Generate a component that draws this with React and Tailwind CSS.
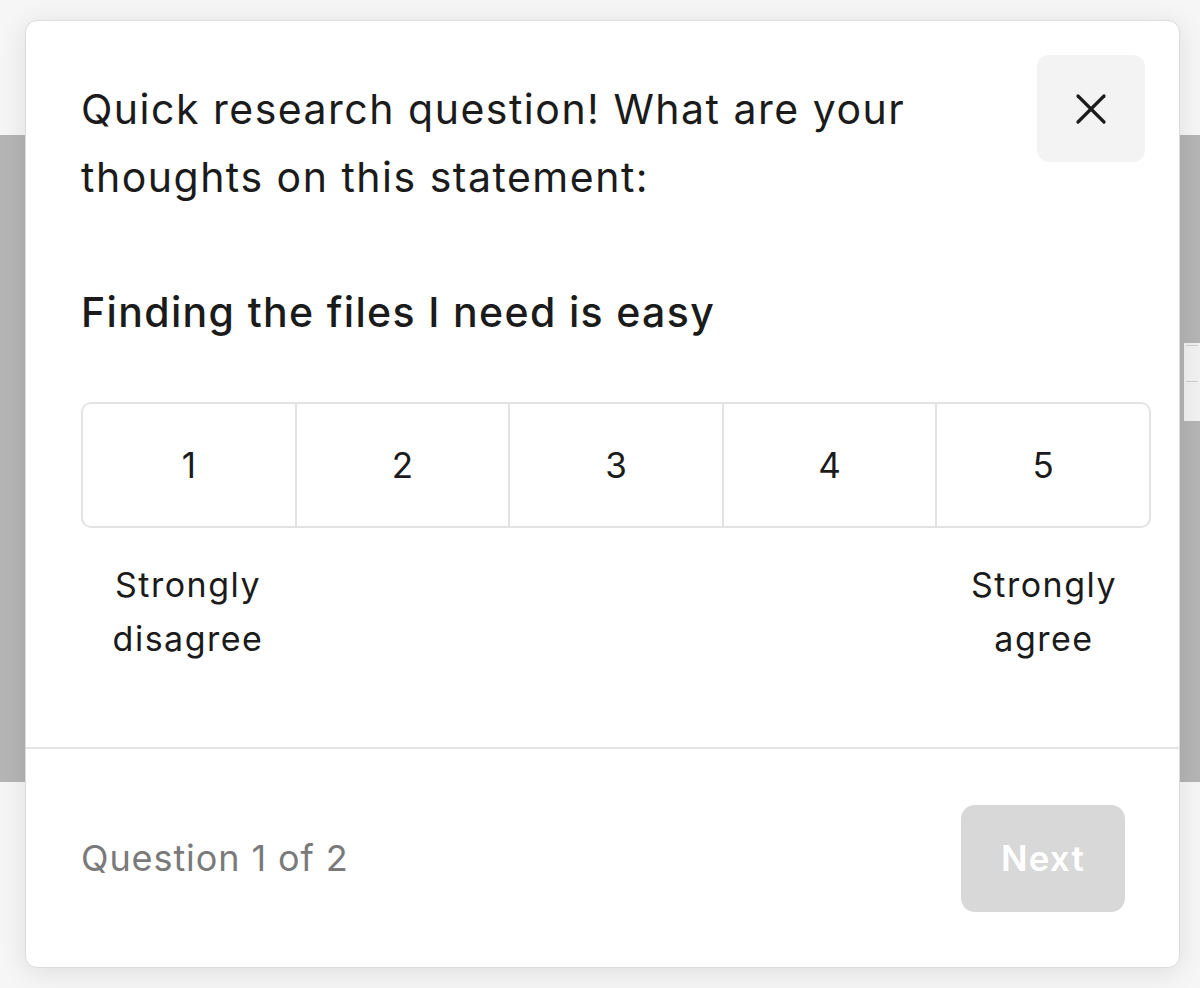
import { X } from "lucide-react";

const options = [1, 2, 3, 4, 5];

const App = () => {
  return (
    <div
      className="relative w-[1200px] h-[988px] overflow-hidden bg-[#f6f6f6]"
      style={{ fontFamily: "Inter, 'Noto Sans', sans-serif" }}
    >
      {/* backdrop page */}
      <div className="flex flex-col h-full">
        <div className="h-[135px] bg-[#f6f6f6]" />
        <div className="h-[647px] bg-[#b5b5b5] flex justify-end">
          <div className="w-[16px] mt-[208px] h-[78px] bg-[#f2f2f2] flex flex-col gap-2 p-[2px]">
            <div className="h-[28px] border-t border-[#cfcfcf]" />
            <div className="h-[28px] border-t border-[#cfcfcf]" />
          </div>
        </div>
        <div className="flex-1 bg-[#f6f6f6]" />
      </div>

      {/* survey card */}
      <div className="absolute left-[25px] top-[20px] w-[1155px] h-[948px] bg-white rounded-[12px] border border-[#dcdcdc] shadow-[0_4px_28px_rgba(0,0,0,0.10)] flex flex-col">
        <button className="absolute top-[34px] right-[34px] w-[108px] h-[107px] rounded-[12px] bg-[#f3f3f3] flex items-center justify-center text-[#1b1b1b]">
          <X className="w-[52px] h-[52px]" strokeWidth={1.5} />
        </button>

        <div className="pl-[55px] pr-[28px] pt-[54px] flex-1">
          <h2 className="max-w-[900px] text-[41px] leading-[68px] text-[#1b1b1b] font-normal tracking-[1.5px]">
            Quick research question! What are your thoughts on this statement:
          </h2>

          <p className="mt-[67px] text-[41px] leading-[68px] text-[#1b1b1b] font-medium tracking-[1.35px]">
            Finding the files I need is easy
          </p>

          <div className="mt-[56px] h-[126px] flex rounded-[10px] border-2 border-[#e3e3e3] overflow-hidden">
            {options.map((n, i) => (
              <button
                key={n}
                className={`flex-1 flex items-center justify-center text-[35px] text-[#1b1b1b] ${
                  i > 0 ? "border-l-2 border-[#e3e3e3]" : ""
                }`}
              >
                {n}
              </button>
            ))}
          </div>

          <div className="mt-[30px] flex justify-between text-[34px] leading-[54px] text-[#1b1b1b] text-center tracking-[1.5px]">
            <div className="w-[214px]">
              Strongly
              <br />
              disagree
            </div>
            <div className="w-[214px]">
              Strongly
              <br />
              agree
            </div>
          </div>
        </div>

        <div className="h-[220px] border-t-2 border-[#e6e6e6] flex items-center justify-between pl-[55px] pr-[54px]">
          <span className="text-[36px] text-[#7a7a7a] tracking-[0.9px]">Question 1 of 2</span>
          <button className="w-[164px] h-[107px] rounded-[14px] bg-[#d8d8d8] text-white text-[35px] font-semibold tracking-[1.2px]">
            Next
          </button>
        </div>
      </div>
    </div>
  );
};

export default App;
